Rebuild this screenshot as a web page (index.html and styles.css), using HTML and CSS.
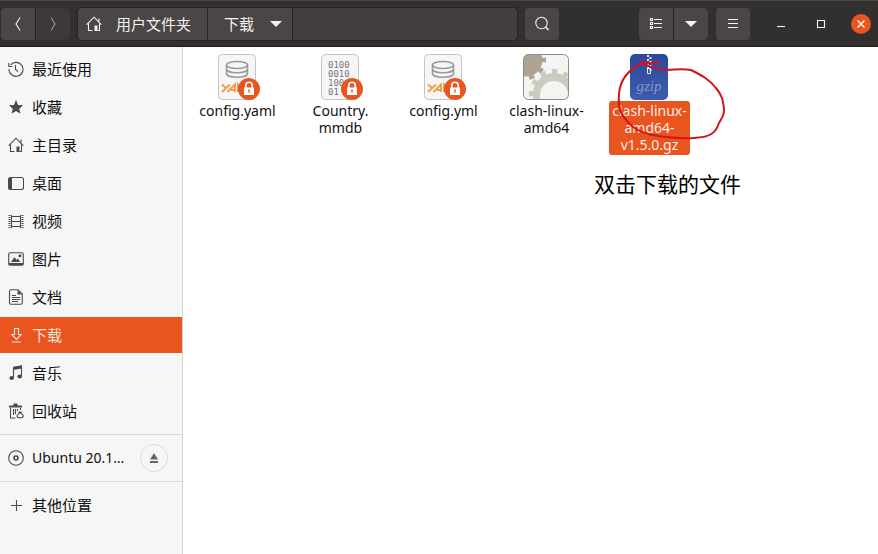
FILE: index.html
```html
<!DOCTYPE html>
<html lang="zh-CN">
<head>
<meta charset="utf-8">
<title>下载</title>
<link rel="stylesheet" href="styles.css">
</head>
<body>
<svg class="defs" aria-hidden="true">
  <symbol id="home" viewBox="0 0 16 16"><path d="M.7 8.6 8 1.2l7.300 7.400M2.500 7.500v7h4M13.500 7.500v7h-2M13 2.500v3" fill="none" stroke="currentColor" stroke-width="1.100"/><path d="M8.500 9.500h3v5.500h-3z" fill="currentColor"/></symbol>
  <symbol id="lock" viewBox="0 0 22 22"><circle cx="11" cy="11" r="11" fill="#e9541f"/><path d="M7.800 10V7.500a3.200 3.200 0 0 1 6.400 0V10" fill="none" stroke="#fff" stroke-width="1.600"/><rect x="6" y="9.500" width="10" height="7.500" fill="#fff"/><path d="M11 11.500v3" stroke="#e9541f" stroke-width="1.500"/></symbol>
  <symbol id="yaml" viewBox="0 0 48 48"><rect x="5.500" y="1.500" width="37" height="45" rx="4" fill="#f6f6f6" stroke="#c4c4c4"/><g fill="none" stroke="#999" stroke-width="1.600"><ellipse cx="24" cy="12" rx="10.500" ry="3.500"/><path d="M13.500 12v4c0 5 21 5 21 0v-4M13.500 16v4.500c0 5 21 5 21 0V16"/></g><path d="m9 31.500 4 3.500M17 31.500l-8 7.500M14.500 39l7.500-7.500V39M18 37h4M25 39v-7.500l4 4" fill="none" stroke="#f0a04b" stroke-width="2"/></symbol>
</svg>
<header class="bar">
  <div class="group">
    <button class="btn" aria-label="后退"><svg width="16" height="16"><path d="M10 1.500 6 8l4 6.500" class="ln"/></svg></button>
    <button class="btn dim" aria-label="前进" disabled><svg width="16" height="16"><path d="m6 1.500 4 6.500-4 6.500" class="ln"/></svg></button>
  </div>
  <nav class="path" aria-label="路径">
    <button class="crumb crumb-home"><svg width="16" height="16"><use href="#home"/></svg><span>用户文件夹</span></button>
    <button class="crumb crumb-here"><span>下载</span><svg width="12" height="6"><path d="M0 0h12L6 6z" fill="currentColor"/></svg></button>
  </nav>
  <button class="btn search" aria-label="搜索"><svg width="16" height="16"><circle cx="7.500" cy="7" r="5.700" class="ln"/><path d="m11.500 11 3 3" class="ln thick"/></svg></button>
  <div class="group">
    <button class="btn" aria-label="列表视图"><svg width="16" height="16"><path d="M6 3.500h8M6 7.500h8M6 11.500h8" class="ln"/><path d="M2.500 2.500h2v2h-2zM2.500 6.500h2v2h-2zM2.500 10.500h2v2h-2z" class="ln"/></svg></button>
    <button class="btn" aria-label="视图选项"><svg width="12" height="6"><path d="M0 0h12L6 6z" fill="currentColor"/></svg></button>
  </div>
  <button class="btn" aria-label="菜单"><svg width="16" height="16"><path d="M3 3.500h10M3 7.500h10M3 11.500h10" class="ln"/></svg></button>
  <div class="window">
    <button aria-label="最小化"><svg width="20" height="20"><path d="M6 12.500h8" class="ln"/></svg></button>
    <button aria-label="最大化"><svg width="20" height="20"><path d="M6.500 6.500h7v7h-7z" class="ln"/></svg></button>
    <button class="close" aria-label="关闭"><svg width="20" height="20"><path d="m6.500 6.500 7 7m0-7-7 7" class="ln thick"/></svg></button>
  </div>
</header>
<div class="body">
  <aside class="side">
    <ul>
      <li><a href="#"><svg width="16" height="16"><path d="M2.500 4A7 7 0 1 1 1 8M.8 2v3.500h3.500" class="ln"/><path d="M7.500 4v4.500l2.500 2" class="ln"/></svg>最近使用</a></li>
      <li><a href="#"><svg width="16" height="16"><path d="m8 1 2 4.900 5.200.4-4 3.400 1.300 5.100L8 12l-4.500 2.800 1.300-5.100-4-3.400L6 5.900z" fill="currentColor"/></svg>收藏</a></li>
      <li><a href="#"><svg width="16" height="16"><use href="#home"/></svg>主目录</a></li>
      <li><a href="#"><svg width="16" height="16"><rect x=".5" y="2.500" width="15" height="12" rx="2" class="ln"/><path d="M1 3h3v11H1z" fill="currentColor"/></svg>桌面</a></li>
      <li><a href="#"><svg width="16" height="16"><path d="M3.500 2v13M12.500 2v13M3 3.500h10M3 8.500h10M3 13.500h10" class="ln"/><path d="M1.500 2v13M14.500 2v13" class="ln dash"/></svg>视频</a></li>
      <li><a href="#"><svg width="16" height="16"><rect x=".7" y="1.700" width="14.600" height="12.600" rx="1.500" class="ln"/><path d="M1 12h14v2H1zM3 11l3.500-5 2 3 1.500-1.500 2 3.500z" fill="currentColor"/><circle cx="12" cy="4.800" r="1.500" fill="currentColor"/></svg>图片</a></li>
      <li><a href="#"><svg width="16" height="16"><path d="M3 .7h7l4.300 4.300v8.800q0 1.500-1.500 1.500H3q-1.500 0-1.500-1.500V2.200Q1.500.7 3 .7z" class="ln"/><path d="M9.500 1v4.500H14zM4 6h4v1H4zM4 8h8v1H4zM4 10h8v1H4zM4 12h6v1H4z" fill="currentColor"/></svg>文档</a></li>
      <li><a href="#" class="on" aria-current="page"><svg width="16" height="16"><path d="M6.500 1.500h4v6h2.700l-4.700 5-4.700-5h2.700zM4 15h9" class="ln"/></svg>下载</a></li>
      <li><a href="#"><svg width="16" height="16"><path d="M5.500 12.500V2.500l8-1.500v10" class="ln"/><path d="M5 2 14 .5v3L5 5z" fill="currentColor"/><ellipse cx="3.700" cy="13" rx="2.300" ry="1.900" fill="currentColor"/><ellipse cx="11.700" cy="11.500" rx="2.300" ry="1.900" fill="currentColor"/></svg>音乐</a></li>
      <li><a href="#"><svg width="16" height="16"><path d="M1 3.500h13M5.500 1.500h4" class="ln heavy"/><path d="M2.500 5v10h5M5.500 6v6M7.500 6v5M9.500 6v2M12.500 5v2" class="ln"/><path d="M12 9.500c-1 1-3 2-3 3.500 0 1 1 1.800 3 1.800s3.300-.8 3.300-1.800c0-1.500-2.300-2.500-3.300-3.500z" class="ln"/><path d="M10.500 8.500h3v1.500h-3z" fill="currentColor"/></svg>回收站</a></li>
    </ul>
    <ul>
      <li class="disk"><a href="#"><svg width="16" height="16"><circle cx="8" cy="8" r="7.300" class="ln"/><circle cx="8" cy="8" r="2" class="ln thick"/></svg><span>Ubuntu 20.1…</span></a><button class="eject" aria-label="弹出"><svg width="10" height="10"><path d="M5 0l4 6.500H1zM1 8h8v2H1z" fill="currentColor"/></svg></button></li>
    </ul>
    <ul>
      <li><a href="#"><svg width="16" height="16"><path d="M8.500 3v11M3 8.500h11" class="ln"/></svg>其他位置</a></li>
    </ul>
  </aside>
  <main class="files">
    <div class="file">
      <svg class="icon" width="48" height="48"><use href="#yaml"/><use href="#lock" x="25" y="25" width="22" height="22"/></svg>
      <span class="name">config.yaml</span>
    </div>
    <div class="file">
      <svg class="icon" width="48" height="48"><rect x="5.500" y="1.500" width="37" height="45" rx="4" fill="#f6f6f6" stroke="#c4c4c4"/><g class="bits"><text x="12" y="15">0100</text><text x="12" y="24">0010</text><text x="12" y="33">100</text><text x="12" y="42">01</text></g><use href="#lock" x="25" y="25" width="22" height="22"/></svg>
      <span class="name">Country.<br>mmdb</span>
    </div>
    <div class="file">
      <svg class="icon" width="48" height="48"><use href="#yaml"/><use href="#lock" x="25" y="25" width="22" height="22"/></svg>
      <span class="name">config.yml</span>
    </div>
    <div class="file">
      <svg class="icon" width="48" height="48"><defs><clipPath id="tile"><rect x="1.500" y="1.500" width="45" height="45" rx="5"/></clipPath></defs><g clip-path="url(#tile)"><path d="M0 0h48v48H0z" fill="#f4f4f3"/><circle cx="4" cy="7" r="16.500" fill="#aea493"/><circle cx="4" cy="7" r="18" fill="none" stroke="#aea493" stroke-width="4" stroke-dasharray="5.300 6" stroke-dashoffset="3"/><circle cx="32" cy="41" r="21" fill="#cbcbc0"/><circle cx="32" cy="41" r="22.500" fill="none" stroke="#cbcbc0" stroke-width="5" stroke-dasharray="5.300 6.480" stroke-dashoffset="2.700"/><circle cx="32" cy="42" r="14" fill="#f4f4f3"/></g><rect x="1.500" y="1.500" width="45" height="45" rx="5" fill="none" stroke="#8c8c89"/></svg>
      <span class="name">clash-linux-<br>amd64</span>
    </div>
    <div class="file picked">
      <svg class="icon" width="48" height="48"><defs><linearGradient id="blue" x2="0" y2="1"><stop stop-color="#2c489b"/><stop offset="1" stop-color="#3d5cad"/></linearGradient></defs><rect x="5" y="1" width="38" height="46" rx="5" fill="url(#blue)"/><path d="M23 2v14M25.500 4v14" fill="none" stroke="#e7e9f2" stroke-width="2" stroke-dasharray="2 2"/><path d="M22.500 15.500h3v5h-3z" fill="none" stroke="#e7e9f2"/><text x="24" y="38" class="gzip">gzip</text></svg>
      <span class="name">clash-linux-<br>amd64-<br>v1.5.0.gz</span>
      <svg class="ring" width="130" height="90" viewBox="612 55 130 90" aria-hidden="true"><path d="M659 62.500 640 64l5-3.500M640 64c-11 6-20 15-21 30-1 13 1 19 8 27 5 7 12 11 25 14 13 2 27 4 42 3 18-1 22-6 25-15 4-7 5-8 5-14-1-9-2-14-8-21-7-9-15-13-25-18-5-1-15-1-24 0-10-1-18-3-25-7" fill="none" stroke="#d2141c" stroke-width="2" stroke-linecap="round"/></svg>
      <p class="note">双击下载的文件</p>
    </div>
  </main>
</div>
</body>
</html>
```
FILE: styles.css
```css
* { box-sizing: border-box; }
body {
  margin: 0;
  min-height: 100vh;
  display: flex;
  flex-direction: column;
  background: #fff;
  color: #111;
  font: 15px/20px "Noto Sans", "Noto Sans CJK SC", sans-serif;
}
button { margin: 0; padding: 0; border: 0; background: none; color: inherit; font: inherit; }
svg { flex: none; display: block; }
ul { list-style: none; margin: 0; padding: 0; }
.defs { position: absolute; width: 0; height: 0; }
.ln { fill: none; stroke: currentColor; stroke-width: 1.1; }
.thick { stroke-width: 1.6; }
.heavy { stroke-width: 2; }
.dash { stroke-dasharray: 1 1; stroke-width: 2; }

.bar {
  height: 47px;
  display: flex;
  align-items: center;
  padding: 0 7px 0 1px;
  background: #322f2f;
  border-top: 1px solid #494545;
  border-bottom: 1px solid #221c20;
  color: #f4f2f1;
}
.group { display: flex; gap: 1px; background: #252222; border-radius: 4px; }
.btn {
  width: 34px;
  height: 32px;
  display: flex;
  align-items: center;
  justify-content: center;
  background: #4a4645;
  border-radius: 4px;
}
.group .btn:first-child { border-radius: 4px 0 0 4px; }
.group .btn:last-child { border-radius: 0 4px 4px 0; }
.group .dim { background: #3d3939; color: #989492; }
.path {
  flex: 1;
  height: 34px;
  display: flex;
  margin: 0 7px;
  background: #423f3e;
  border: 1px solid #252222;
  border-radius: 5px;
  overflow: hidden;
}
.crumb { display: flex; align-items: center; background: #4a4645; border-right: 1px solid #252222; }
.crumb-home { gap: 14px; padding: 0 16px 0 8px; }
.crumb-here { gap: 16px; padding: 0 10px 0 16px; }
.search { margin-right: 80px; }
.bar > .group + .btn { margin-left: 8px; }
.window { display: flex; gap: 20px; margin-left: 21px; }
.window button { width: 20px; height: 20px; border-radius: 50%; }
.window .close { background: #e9541f; }

.body { flex: 1; display: flex; }
.side { flex: none; width: 183px; padding-top: 4px; background: #f6f6f6; border-right: 1px solid #d4d4d4; }
.side ul { display: grid; gap: 2px; }
.side ul + ul { margin-top: 5px; border-top: 1px solid #d9d9d9; padding-top: 5px; }
.side a {
  height: 36px;
  display: flex;
  align-items: center;
  gap: 8px;
  padding-left: 8px;
  color: #111;
  text-decoration: none;
}
.side a svg { color: #4a4a4a; }
.side .on, .side .on svg { background: #e9541f; color: #fbe3d6; }
.disk { display: flex; align-items: center; justify-content: space-between; padding-right: 14px; font-size: 14px; }
.eject {
  width: 28px;
  height: 28px;
  display: grid;
  place-items: center;
  border: 1px solid #dcdcdc;
  border-radius: 50%;
  color: #666;
}

.files {
  flex: 1;
  display: grid;
  grid-template-columns: repeat(auto-fill, 103px);
  align-content: start;
  padding: 6px 3px;
  font-size: 14px;
  line-height: 17px;
}
.file { position: relative; display: flex; flex-direction: column; align-items: center; text-align: center; }
.icon { margin-right: 1px; }
.name { padding: 1px 3px 2px; border-radius: 3px; }
.picked .name { background: #e9541f; color: #fdeee6; }
.bits { font: 9px "DejaVu Sans Mono", monospace; fill: #777; }
.gzip { font: italic 15px "Liberation Serif", serif; fill: #8493c6; text-anchor: middle; }
.ring { position: absolute; left: 14px; top: 2px; }
.note {
  position: absolute;
  left: -4px;
  top: 116px;
  margin: 0;
  font-size: 21px;
  line-height: 30px;
  color: #000;
  white-space: nowrap;
}
```
